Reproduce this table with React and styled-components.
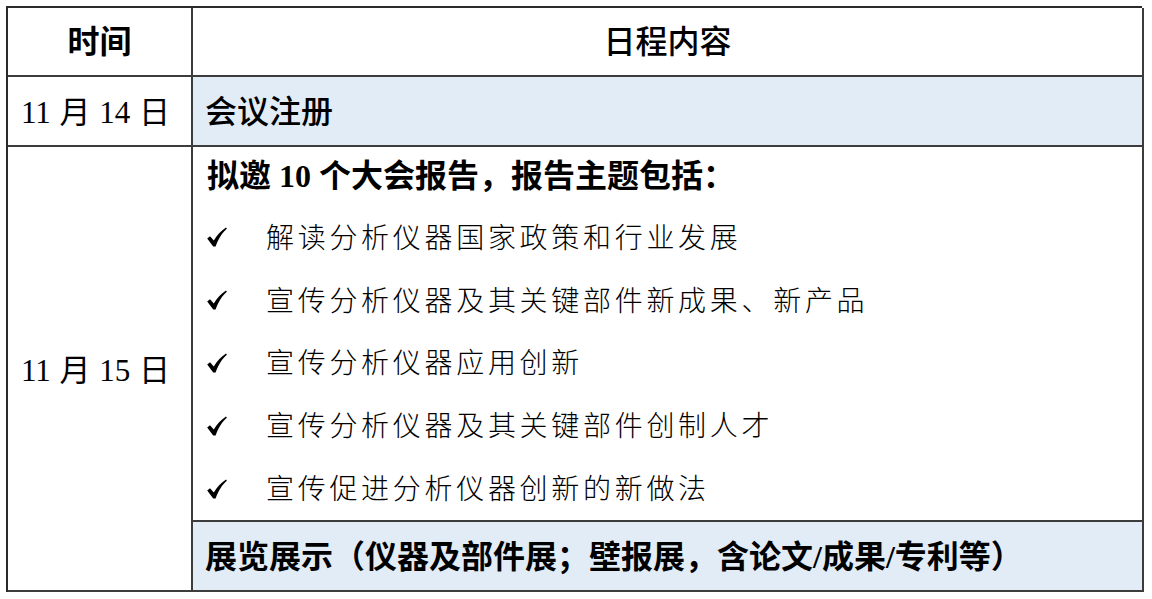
import React from 'react';
import styled, { createGlobalStyle } from 'styled-components';

const GlobalStyle = createGlobalStyle`
  html, body {
    margin: 0;
    padding: 0;
    background: #ffffff;
  }
`;

const topics = [
  '解读分析仪器国家政策和行业发展',
  '宣传分析仪器及其关键部件新成果、新产品',
  '宣传分析仪器应用创新',
  '宣传分析仪器及其关键部件创制人才',
  '宣传促进分析仪器创新的新做法',
];

function Check() {
  return (
    <CheckMark viewBox="0 0 20 20">
      <path d="M0.2 11.4 L3 9.2 L6.8 13.6 C9.8 8.2 14 3.6 19 0.4 L19.9 1.8 C15.4 5.6 11.6 11.2 8.6 19.4 L6.2 19.4 Z" />
    </CheckMark>
  );
}

export default function App() {
  return (
    <Page>
      <GlobalStyle />
      <Schedule>
        <HeadCell strong>时间</HeadCell>
        <HeadCell>日程内容</HeadCell>

        <DateCell>11 月 14 日</DateCell>
        <ShadedCell>会议注册</ShadedCell>

        <DateCell span>11 月 15 日</DateCell>
        <ListCell>
          <ListTitle>拟邀 10 个大会报告，报告主题包括：</ListTitle>
          {topics.map(t => (
            <Topic key={t}>
              <Check />
              <span>{t}</span>
            </Topic>
          ))}
        </ListCell>
        <ShadedCell bold>展览展示（仪器及部件展；壁报展，含论文/成果/专利等）</ShadedCell>
      </Schedule>
    </Page>
  );
}

const Page = styled.div`
  padding: 6px 0 0 6px;
  width: 1152px;
  height: 599px;
  box-sizing: border-box;
`;

const Schedule = styled.div`
  display: grid;
  grid-template-columns: 185px 951px;
  grid-template-rows: 69px 70px 375px 70px;
  border-top: 2px solid #2b2b2b;
  border-left: 2px solid #2b2b2b;
  width: 1136px;
  box-sizing: border-box;
  color: #000;
`;

const Cell = styled.div`
  border-right: 2px solid #3c3c3c;
  border-bottom: 2px solid #3c3c3c;
  box-sizing: border-box;
  display: flex;
  align-items: center;
  padding-bottom: 5px;
  font-family: 'Liberation Serif', 'Noto Sans CJK SC', serif;
  font-size: 32px;
`;

const HeadCell = styled(Cell)`
  justify-content: center;
  font-family: 'Noto Sans CJK SC', sans-serif;
  font-weight: ${p => (p.strong ? 700 : 500)};
`;

const DateCell = styled(Cell)`
  justify-content: center;
  padding-bottom: 3px;
  padding-right: 8px;
  font-size: 31px;
  font-weight: 400;
  word-spacing: 1px;
  grid-row: ${p => (p.span ? 'span 2' : 'auto')};
`;

const ShadedCell = styled(Cell)`
  background: #e2ecf6;
  padding-left: 12px;
  font-weight: ${p => (p.bold ? 700 : 500)};
`;

const ListCell = styled(Cell)`
  flex-direction: column;
  align-items: flex-start;
  justify-content: flex-start;
  padding: 0 0 0 14px;
  overflow: hidden;
`;

const ListTitle = styled.div`
  height: 59px;
  line-height: 59px;
  font-weight: 700;
  white-space: nowrap;
`;

const Topic = styled.div`
  display: flex;
  align-items: center;
  height: 63px;
  padding-bottom: 3px;
  box-sizing: border-box;
  font-family: 'Noto Sans CJK SC', sans-serif;
  font-size: 28px;
  font-weight: 300;
  letter-spacing: 3.7px;
  white-space: nowrap;

  span {
    margin-left: 39px;
  }
`;

const CheckMark = styled.svg`
  width: 20px;
  height: 20px;
  margin-top: 3px;
  fill: #000;
  flex: none;
`;
